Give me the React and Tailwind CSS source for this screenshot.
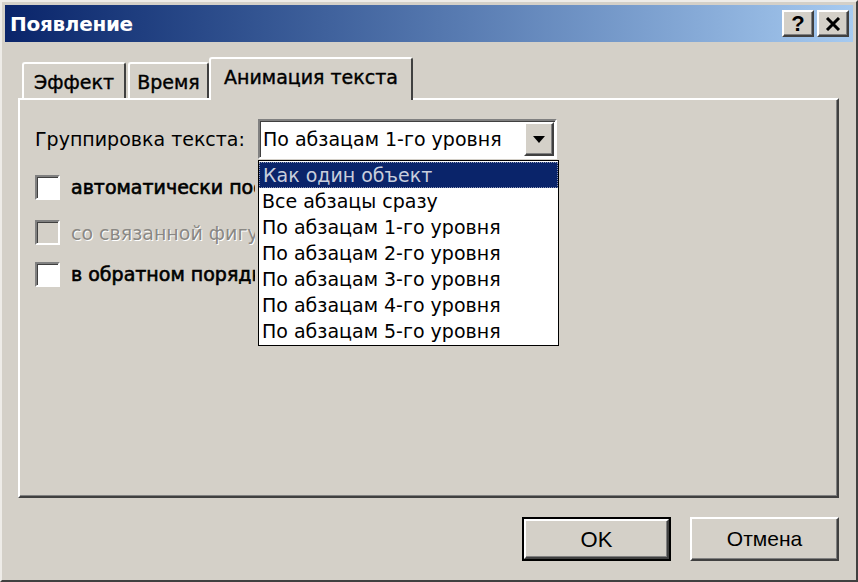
import React from 'react';

const raised =
  'border-2 border-t-white border-l-white border-r-[#404040] border-b-[#404040] shadow-[inset_-1px_-1px_0_#808080]';
const sunken =
  'border-2 border-t-[#808080] border-l-[#808080] border-r-white border-b-white shadow-[inset_1px_1px_0_#404040]';

const options = [
  'Как один объект',
  'Все абзацы сразу',
  'По абзацам 1-го уровня',
  'По абзацам 2-го уровня',
  'По абзацам 3-го уровня',
  'По абзацам 4-го уровня',
  'По абзацам 5-го уровня',
];

// подпись обрезается там, где её закрывает раскрытый список
const CheckRow = ({ label, disabled, className }) => (
  <div className={`flex items-center ${className}`}>
    <div className={`w-[25px] h-[25px] shrink-0 ${sunken} ${disabled ? 'bg-[#d4d0c8]' : 'bg-white'}`} />
    {disabled ? (
      <span className="ml-[11px] w-[184px] overflow-hidden text-[#8a8884] [text-shadow:1px_1px_0_#ffffff] whitespace-nowrap">{label}</span>
    ) : (
      <span className="ml-[11px] w-[184px] overflow-hidden [-webkit-text-stroke:0.6px_black] whitespace-nowrap">{label}</span>
    )}
  </div>
);

const App = () => {
  return (
    <div className="w-[858px] h-[582px] bg-[#d4d0c8] border-2 border-t-[#eeece8] border-l-[#eeece8] border-r-[#404040] border-b-[#404040] p-[3px] flex flex-col font-['DejaVu_Sans',sans-serif] text-[19px] text-black overflow-hidden">
      {/* заголовок окна */}
      <div className="h-[37px] flex items-center justify-between pl-[5px] pr-[4px] bg-gradient-to-r from-[#0a246a] to-[#a6caf0]">
        <span className="text-white font-bold text-[20px] tracking-[-0.3px]">Появление</span>
        <div className="flex gap-[3px]">
          <div className={`w-[32px] h-[27px] bg-[#d4d0c8] ${raised} flex items-center justify-center font-['Liberation_Sans',sans-serif] font-bold text-[22px] leading-none`}>?</div>
          <div className={`w-[32px] h-[27px] bg-[#d4d0c8] ${raised} flex items-center justify-center`}>
            <svg width="16" height="14" viewBox="0 0 16 14">
              <path d="M2 1 L14 13 M14 1 L2 13" stroke="#000" strokeWidth="3" />
            </svg>
          </div>
        </div>
      </div>

      <div className="flex flex-col px-[13px] pt-[15px]">
        {/* вкладки */}
        <div className="flex items-end h-[41px] pl-[4px] [-webkit-text-stroke:0.4px_black]">
          <div className="h-[36px] w-[104px] bg-[#d4d0c8] border-l-2 border-t-2 border-white border-r-2 border-r-[#404040] rounded-t-[3px] flex items-center justify-center pt-[2px]">
            Эффект
          </div>
          <div className="h-[36px] w-[81px] ml-[2px] bg-[#d4d0c8] border-l-2 border-t-2 border-white border-r-2 border-r-[#404040] rounded-t-[3px] flex items-center justify-center pt-[2px]">
            Время
          </div>
          <div className="relative z-10 h-[43px] -mb-[2px] w-[204px] bg-[#d4d0c8] border-l-2 border-t-2 border-white border-r-2 border-r-[#404040] rounded-t-[3px] flex items-center justify-center pb-[4px]">
            Анимация текста
          </div>
        </div>

        {/* панель */}
        <div className="relative h-[400px] w-[821px] border-2 border-t-white border-l-white border-r-[#404040] border-b-[#404040] shadow-[inset_-1px_-1px_0_#808080] pl-[15px] pt-[19px]">
          <div className="flex items-center">
            <div className="w-[223px] whitespace-nowrap">Группировка текста:</div>
            <div className={`w-[299px] h-[40px] bg-white ${sunken} flex items-center justify-between pl-[3px] pr-[1px]`}>
              <span className="whitespace-nowrap">По абзацам 1-го уровня</span>
              <div className={`w-[30px] h-[34px] bg-[#d4d0c8] ${raised} flex items-center justify-center`}>
                <svg width="12" height="7" viewBox="0 0 12 7">
                  <path d="M0 0 H12 L6 7 Z" fill="#000" />
                </svg>
              </div>
            </div>
          </div>

          <CheckRow className="mt-[14px]" label="автоматически после" />
          <CheckRow className="mt-[17px]" label="со связанной фигурой" disabled />
          <CheckRow className="mt-[13px]" label="в обратном порядке" />

          {/* раскрытый список */}
          <div className="absolute left-[238px] top-[60px] w-[301px] h-[186px] bg-white border border-black pt-[1px] z-20">
            {options.map((opt, i) => (
              <div
                key={opt}
                className={`h-[26px] pl-[3px] flex items-center whitespace-nowrap ${
                  i === 0 ? 'bg-[#0a246a] text-[#c8cedd] border border-dotted border-[#8c96b4]' : ''
                }`}
              >
                {opt}
              </div>
            ))}
          </div>
        </div>

        {/* кнопки */}
        <div className="flex justify-end gap-[19px] mt-[19px] w-[821px]">
          <div className="w-[149px] h-[44px] border-2 border-black">
            <div className={`w-full h-full bg-[#d4d0c8] ${raised} flex items-center justify-center font-['Liberation_Sans',sans-serif] text-[22px]`}>
              OK
            </div>
          </div>
          <div className={`w-[149px] h-[44px] bg-[#d4d0c8] ${raised} flex items-center justify-center font-['Liberation_Sans',sans-serif] text-[21px]`}>
            Отмена
          </div>
        </div>
      </div>
    </div>
  );
};

export default App;
